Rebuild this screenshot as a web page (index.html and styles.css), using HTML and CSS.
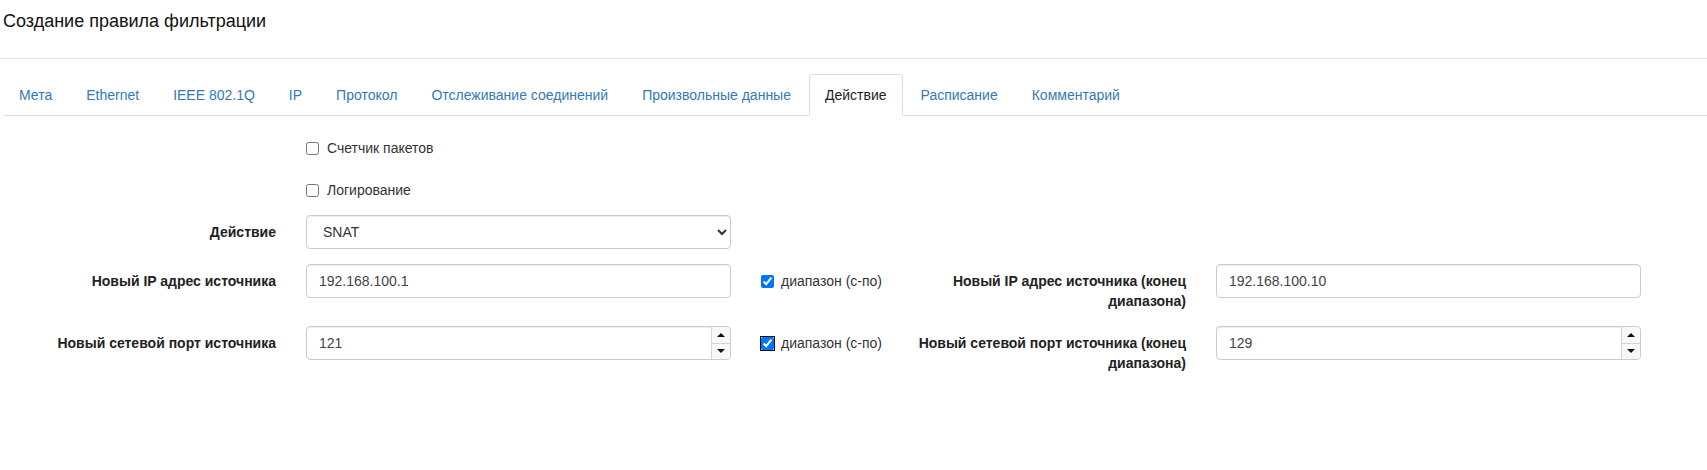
FILE: index.html
```html
<!DOCTYPE html>
<html>
    <head>
        <meta charset="utf-8">
        <link rel="stylesheet" href="styles.css">
    </head>
    <body>
        <div class="header">
            <h4 class="title">Создание правила фильтрации</h4>
        </div>
        <ul class="tabs">
            <li><a>Мета</a></li>
            <li><a>Ethernet</a></li>
            <li><a>IEEE 802.1Q</a></li>
            <li><a>IP</a></li>
            <li><a>Протокол</a></li>
            <li><a>Отслеживание соединений</a></li>
            <li><a>Произвольные данные</a></li>
            <li class="active"><a>Действие</a></li>
            <li><a>Расписание</a></li>
            <li><a>Комментарий</a></li>
        </ul>
        <form class="form">
            <div class="group">
                <div class="check wide">
                    <label><input type="checkbox"> Счетчик пакетов</label>
                </div>
            </div>
            <div class="group">
                <div class="check wide">
                    <label><input type="checkbox"> Логирование</label>
                </div>
            </div>
            <div class="group">
                <label class="caption">Действие</label>
                <div class="cell">
                    <select class="control">
                        <option>SNAT</option>
                        <option>DNAT</option>
                        <option>ACCEPT</option>
                        <option>DROP</option>
                    </select>
                </div>
            </div>
            <div class="group">
                <label class="caption">Новый IP адрес источника</label>
                <div class="cell">
                    <input class="control" type="text" value="192.168.100.1">
                </div>
                <div class="check">
                    <label><input type="checkbox" checked> диапазон (с-по)</label>
                </div>
                <label class="caption">Новый IP адрес источника (конец диапазона)</label>
                <div class="cell">
                    <input class="control" type="text" value="192.168.100.10">
                </div>
            </div>
            <div class="group">
                <label class="caption">Новый сетевой порт источника</label>
                <div class="cell">
                    <div class="control number">
                        <input type="text" value="121">
                        <div class="spin"><span class="up"></span><span class="down"></span></div>
                    </div>
                </div>
                <div class="check">
                    <label><input class="focused" type="checkbox" checked> диапазон (с-по)</label>
                </div>
                <label class="caption">Новый сетевой порт источника (конец диапазона)</label>
                <div class="cell">
                    <div class="control number">
                        <input type="text" value="129">
                        <div class="spin"><span class="up"></span><span class="down"></span></div>
                    </div>
                </div>
            </div>
        </form>
    </body>
</html>
```

FILE: styles.css
```css
body {
    margin: 0;
    font-family: "Liberation Sans", Arial, sans-serif;
    font-size: 14px;
    line-height: 20px;
    color: #333;
    background-color: white;
}
.header {
    height: 59px;
    box-sizing: border-box;
    padding: 11px 3px 0;
    border-bottom: 1px solid #e5e5e5;
}
.header .title {
    margin: 0;
    font-size: 18px;
    font-weight: normal;
    line-height: 20px;
    color: #111;
}
.tabs {
    display: flex;
    margin: 15px 0 0 3px;
    padding: 0;
    list-style: none;
    border-bottom: 1px solid #ddd;
}
.tabs li {
    margin: 0 2px -1px 0;
}
.tabs li a {
    display: block;
    padding: 10px 15px;
    border: 1px solid transparent;
    border-radius: 4px 4px 0 0;
    color: #337ab7;
    cursor: pointer;
}
.tabs li.active a {
    border-color: #ddd;
    border-bottom-color: white;
    background-color: white;
    color: #222;
}
.form {
    padding-top: 15px;
}
.group {
    display: grid;
    grid-template-columns: 291px 455px 152px 303px 455px;
    margin-bottom: 15px;
}
.caption {
    padding: 7px 15px 0;
    text-align: right;
    font-weight: bold;
    color: #222;
}
.cell {
    padding: 0 15px;
}
.check {
    padding: 7px 15px 0;
    min-height: 20px;
}
.check.wide {
    grid-column: 2 / 6;
}
.check label {
    display: flex;
    align-items: center;
    cursor: pointer;
}
.check input {
    width: 13px;
    height: 13px;
    margin: 0 7px 0 0;
}
.check.wide input {
    margin-right: 8px;
}
.check input.focused {
    border-radius: 2px;
    box-shadow: 0 0 0 1px #101010;
}
.control {
    display: block;
    width: 100%;
    height: 34px;
    box-sizing: border-box;
    padding: 6px 12px;
    font-family: inherit;
    font-size: 14px;
    line-height: 20px;
    color: #444;
    background-color: white;
    border: 1px solid #ccc;
    border-radius: 4px;
    box-shadow: inset 0 1px 1px rgba(0, 0, 0, 0.075);
}
select.control {
    color: #333;
}
.control.number {
    display: flex;
    padding: 0;
    overflow: hidden;
}
.control.number input {
    flex: 1;
    min-width: 0;
    padding: 6px 12px;
    border: none;
    outline: none;
    background: transparent;
    font-family: inherit;
    font-size: 14px;
    color: #444;
}
.spin {
    display: flex;
    flex-direction: column;
    width: 18px;
    border-left: 1px solid #d4d4d4;
}
.spin span {
    flex: 1;
    display: flex;
    align-items: center;
    justify-content: center;
    background-color: #f8f8f8;
}
.spin span.down {
    border-top: 1px solid #d4d4d4;
}
.spin span::before {
    content: "";
    border-left: 4px solid transparent;
    border-right: 4px solid transparent;
}
.spin span.up::before {
    border-bottom: 4px solid #111;
}
.spin span.down::before {
    border-top: 4px solid #111;
}
```
